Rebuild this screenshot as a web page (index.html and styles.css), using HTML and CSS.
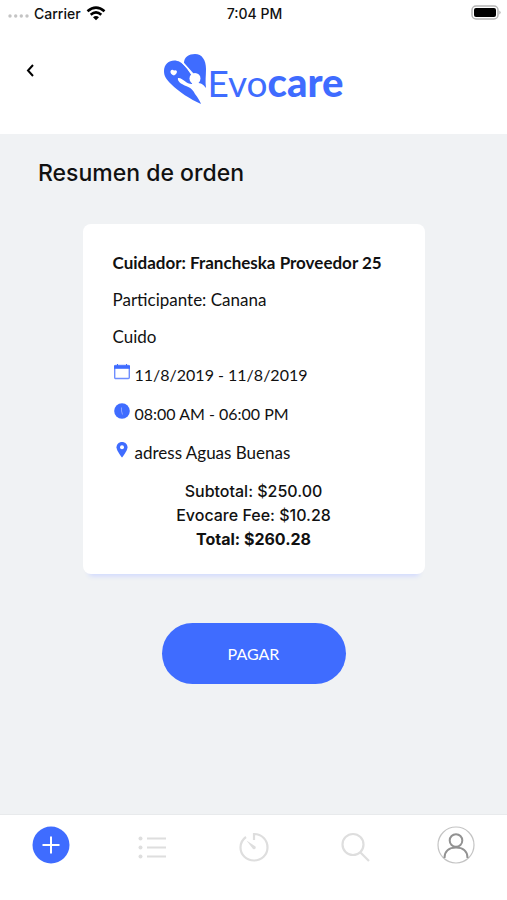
FILE: index.html
```html
<!DOCTYPE html>
<html lang="es">
<head>
<meta charset="utf-8">
<meta name="viewport" content="width=device-width, initial-scale=1">
<title>Evocare</title>
<link rel="stylesheet" href="styles.css">
</head>
<body>
<div class="status">
  <div class="carrier">
    <svg width="21" height="10" viewBox="0 0 21 10" fill="#c4c4c4"><circle cx="2" cy="8" r="1.700"/><circle cx="7.700" cy="8" r="1.700"/><circle cx="13.300" cy="8" r="1.700"/><circle cx="19" cy="8" r="1.700"/></svg>
    <span>Carrier</span>
    <svg width="20" height="15" viewBox="0 0 20 15" fill="none" stroke="#000" stroke-width="2.6"><path d="M1.5 5.3Q10-2 18.500 5.300M4.700 8.700Q10 4.200 15.300 8.700"/><path d="M7 11.200Q10 8.700 13 11.200L10 14.300Z" fill="#000" stroke="none"/></svg>
  </div>
  <span>7:04 PM</span>
  <svg class="battery" width="30" height="16" viewBox="0 0 30 16"><rect x="1" y="1" width="26" height="13" rx="4" fill="#fff" stroke="#b5b5b5" stroke-width="1.500"/><rect x="3" y="3" width="22" height="9" rx="2" fill="#000"/><path d="M28.500 5.500Q30.500 7.500 28.500 9.500Z" fill="#999"/></svg>
</div>
<header class="header">
  <button class="back" aria-label="Volver"><svg width="8" height="13" viewBox="0 0 8 13" fill="none" stroke="#000" stroke-width="2"><path d="M7 1L2 6.500L7 12"/></svg></button>
  <div class="logo">
    <svg width="44" height="52" viewBox="0 0 44 52">
      <path d="M20 9C20 3 25 0 31 0C38 0 42 6 42 15C42 22 41 27 42 34C39 30 37 29 33 29L30 20Z" fill="#3f6cff"/>
      <path d="M0 17C0 8 9 4 16 8C21 11 25 17 29 22L28 30C22 30 18 23 14 24C13 27 17 30 22 32C27 34 29 36 31 40C34 44 36 47 37 50C26 45 15 38 7 30C2 25 0 22 0 17Z" fill="#3f6cff"/>
      <path d="M18.500 8.500C22 12 26 17 29 22" fill="none" stroke="#fff" stroke-width="1.500"/>
      <circle cx="31" cy="24.500" r="5.500" fill="#fff"/>
      <path d="M6.500 17Q8 15 10 16.500Q13 15.500 13 18Q12.500 20.500 10 21.500Q6 20 6.500 17Z" fill="#fff"/>
    </svg>
    <span class="word">Evo<b>care</b></span>
  </div>
</header>
<main class="main">
  <h1>Resumen de orden</h1>
  <section class="card">
    <p class="line strong">Cuidador: Francheska Proveedor 25</p>
    <p class="line">Participante: Canana</p>
    <p class="line">Cuido</p>
    <p class="detail"><svg width="18" height="18" viewBox="0 0 18 18"><rect x="1.700" y="2.500" width="14.600" height="13" rx="1" fill="none" stroke="#6f8eff" stroke-width="1.400"/><path d="M1 2.500H17V5.800H1Z" fill="#3f6cff"/><path d="M4.500 1V3M13.500 1V3" stroke="#3f6cff"/></svg><span>11/8/2019 - 11/8/2019</span></p>
    <p class="detail"><svg width="18" height="18" viewBox="0 0 18 18"><circle cx="9" cy="9" r="7.800" fill="#3f6cff"/><path d="M8.500 5.500V9L9.500 12.500" fill="none" stroke="#8ba3ff"/></svg><span>08:00 AM - 06:00 PM</span></p>
    <p class="detail place"><svg width="18" height="18" viewBox="0 0 18 18"><path d="M9 1C6 1 3.500 3.200 3.500 6.300C3.500 10 9 16.500 9 16.500S14.500 10 14.500 6.300C14.500 3.200 12 1 9 1Z" fill="#3f6cff"/><circle cx="9" cy="6.300" r="2" fill="#fff"/></svg><span>adress Aguas Buenas</span></p>
    <div class="totals">
      <p>Subtotal: $250.00</p>
      <p>Evocare Fee: $10.28</p>
      <p class="total">Total: $260.28</p>
    </div>
  </section>
  <button class="pay">PAGAR</button>
</main>
<nav class="tabs">
  <a href="#nuevo" aria-label="Nuevo"><svg width="38" height="38" viewBox="0 0 38 38"><circle cx="19" cy="19" r="18.500" fill="#3f6cff"/><path d="M19 10.500V27.500M10.500 19H27.500" stroke="#fff" stroke-width="2"/></svg></a>
  <a href="#lista" aria-label="Lista"><svg width="38" height="38" viewBox="0 0 38 38" stroke="#dedede" stroke-width="2"><path d="M14 12.500H33M14 21.500H33M14 30.500H33"/><g fill="#dedede" stroke="none"><circle cx="7.500" cy="12.500" r="2"/><circle cx="7.500" cy="21.500" r="2"/><circle cx="7.500" cy="30.500" r="2"/></g></svg></a>
  <a href="#historial" aria-label="Historial"><svg width="38" height="38" viewBox="0 0 38 38" fill="none" stroke="#dedede" stroke-width="2.200"><path d="M20 14V8C28 8 33.500 14 33.500 21.500C33.500 29 27.500 34.500 20 34.500S6.500 29 6.500 21.500C6.500 17 8.500 13.500 12 11"/><path d="M12.500 14.500L21.500 20.500Q22.500 24 19 23Z" fill="#dedede" stroke="none"/></svg></a>
  <a href="#buscar" aria-label="Buscar"><svg width="38" height="38" viewBox="0 0 38 38" fill="none" stroke="#dedede" stroke-width="2.200"><circle cx="17" cy="18.500" r="10.500"/><path d="M24.500 26.500L33 35"/></svg></a>
  <a href="#perfil" aria-label="Perfil"><svg width="38" height="38" viewBox="0 0 38 38" fill="none"><circle cx="19" cy="19" r="18" stroke="#c4c4c4" stroke-width="1.200"/><g stroke="#929292" stroke-width="2"><circle cx="19" cy="14.500" r="6.300"/><path d="M7.500 32C7.500 25 12.500 21.500 19 21.500S30.500 25 30.500 32"/></g></svg></a>
</nav>
</body>
</html>
```
FILE: styles.css
```css
* { box-sizing: border-box; }
body {
  margin: 0;
  min-height: 100vh;
  display: flex;
  flex-direction: column;
  background: #f0f2f4;
  color: #111;
  font-family: Inter, "Liberation Sans", sans-serif;
}
p, h1 { margin: 0; }
svg { display: block; flex: none; }
button { border: 0; padding: 0; cursor: pointer; }
.status {
  display: grid;
  grid-template-columns: 1fr auto 1fr;
  align-items: center;
  height: 26px;
  padding: 0 6px 0 8px;
  background: #fff;
  font-size: 14px;
  font-weight: 500;
}
.carrier { display: flex; align-items: center; gap: 5px; }
.battery { justify-self: end; }
.header {
  display: grid;
  grid-template-columns: 40px 1fr 40px;
  align-items: start;
  height: 108px;
  padding: 28px 20px 0;
  background: #fff;
}
.back {
  width: 20px;
  height: 32px;
  display: grid;
  place-items: center;
  background: none;
}
.logo { display: flex; justify-content: center; }
.word {
  padding-top: 6px;
  color: #3f6cff;
  font-family: Lato, sans-serif;
  font-size: 37px;
  line-height: 44px;
}
.word b { font-size: 40px; font-weight: 900; }
.main {
  flex: 1;
  display: flex;
  flex-direction: column;
  align-items: center;
}
h1 {
  align-self: stretch;
  padding: 24px 38px 35px;
  font-size: 23px;
  line-height: 31px;
  font-weight: 500;
}
.card {
  width: calc(100% - 165px);
  max-width: 480px;
  padding: 20px 30px 23px;
  border-radius: 8px;
  background: #fff;
  box-shadow: 0 8px 5px -6px #cfd8ff;
  font-size: 16px;
}
.line, .detail { font-family: Lato, "Open Sans", sans-serif; }
.line { font-size: 17px; line-height: 37px; }
.strong { font-weight: 700; }
.detail { display: flex; gap: 4px; line-height: 39px; }
.detail svg { margin-top: 8px; }
.place { font-size: 17px; }
.totals { padding-top: 7px; text-align: center; line-height: 24px; font-weight: 500; }
.total { font-weight: 700; }
.pay {
  width: 184px;
  height: 61px;
  margin: 49px 0;
  border-radius: 31px;
  background: #3f6cff;
  color: #fff;
  font-family: Lato, sans-serif;
  font-size: 16px;
}
.tabs {
  display: flex;
  justify-content: space-around;
  height: 86px;
  padding-top: 11px;
  border-top: 1px solid #e8eaec;
  background: #fff;
}
```
